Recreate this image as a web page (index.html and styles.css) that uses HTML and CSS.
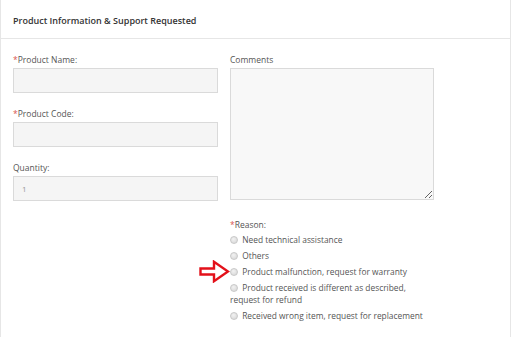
FILE: index.html
```html
<!DOCTYPE html>
<html lang="en">
<head>
    <meta charset="UTF-8">
    <title>Product Information</title>
    <link rel="stylesheet" href="styles.css">
</head>
<body>
    <div class="panel">
        <div class="panel-head">Product Information &amp; Support Requested</div>
        <div class="panel-body">
            <div class="col">
                <label class="field-label"><span class="req">*</span>Product Name:</label>
                <input class="text-input" type="text">
                <label class="field-label"><span class="req">*</span>Product Code:</label>
                <input class="text-input" type="text">
                <label class="field-label">Quantity:</label>
                <input class="text-input" type="text" value="1">
            </div>
            <div class="col">
                <label class="field-label">Comments</label>
                <textarea class="comments"></textarea>
                <div class="reason">
                    <label class="field-label reason-label"><span class="req">*</span>Reason:</label>
                    <label class="option"><input type="radio" name="reason"> Need technical assistance</label>
                    <label class="option"><input type="radio" name="reason"> Others</label>
                    <label class="option marked">
                        <svg class="arrow" width="31" height="23" viewBox="0 0 31 23">
                            <path d="M1.5 8.5 H15 V1.8 L29 11.5 L15 21.2 V14.5 H1.5 Z" fill="#fff" stroke="#e3111a" stroke-width="2.4" stroke-linejoin="miter"/>
                        </svg>
                        <input type="radio" name="reason"> Product malfunction, request for warranty</label>
                    <label class="option"><input type="radio" name="reason"> Product received is different as described, request for refund</label>
                    <label class="option"><input type="radio" name="reason"> Received wrong item, request for replacement</label>
                </div>
            </div>
        </div>
    </div>
</body>
</html>
```

FILE: styles.css
```css
body {
    margin: 0;
    font-family: "Open Sans", Arial, sans-serif;
    color: #555;
    background: #fff;
}
.panel {
    width: 511px;
    height: 337px;
    border-left: 1px solid #e6e6e6;
    border-right: 1px solid #e6e6e6;
    box-sizing: border-box;
}
.panel-head {
    height: 39px;
    padding: 14px 12px 0;
    box-sizing: border-box;
    border-bottom: 1px solid #e6e6e6;
    font-size: 9px;
    font-weight: 600;
    color: #333;
}
.panel-body {
    display: flex;
    gap: 12px;
    padding: 15px 12px 0;
}
.col {
    width: 205px;
    display: flex;
    flex-direction: column;
}
.field-label {
    font-size: 8.5px;
    line-height: 12px;
    margin-bottom: 2px;
}
.req {
    color: #d9534f;
}
.text-input {
    height: 25px;
    margin: 0 0 15px;
    padding: 0 8px;
    box-sizing: border-box;
    background: #f5f5f5;
    border: 1px solid #dadada;
    font-family: inherit;
    font-size: 8px;
    color: #999;
    outline: none;
}
.comments {
    width: 204px;
    height: 132px;
    margin: 0;
    box-sizing: border-box;
    background: #f8f8f8;
    border: 1px solid #dadada;
    resize: both;
}
.reason {
    margin-top: 19px;
    display: flex;
    flex-direction: column;
}
.reason-label {
    margin-bottom: 3px;
}
.option {
    position: relative;
    font-size: 8.4px;
    line-height: 12px;
    margin-bottom: 4px;
    color: #555;
}
.option input {
    appearance: none;
    width: 8px;
    height: 8px;
    margin: 0 2px 0 0;
    vertical-align: -1px;
    border: 1px solid #c8c8c8;
    border-radius: 50%;
    background: radial-gradient(circle at 40% 35%, #f2f2f2, #d4d4d4);
    box-sizing: border-box;
}
.arrow {
    position: absolute;
    left: -31px;
    top: -6px;
}
```
